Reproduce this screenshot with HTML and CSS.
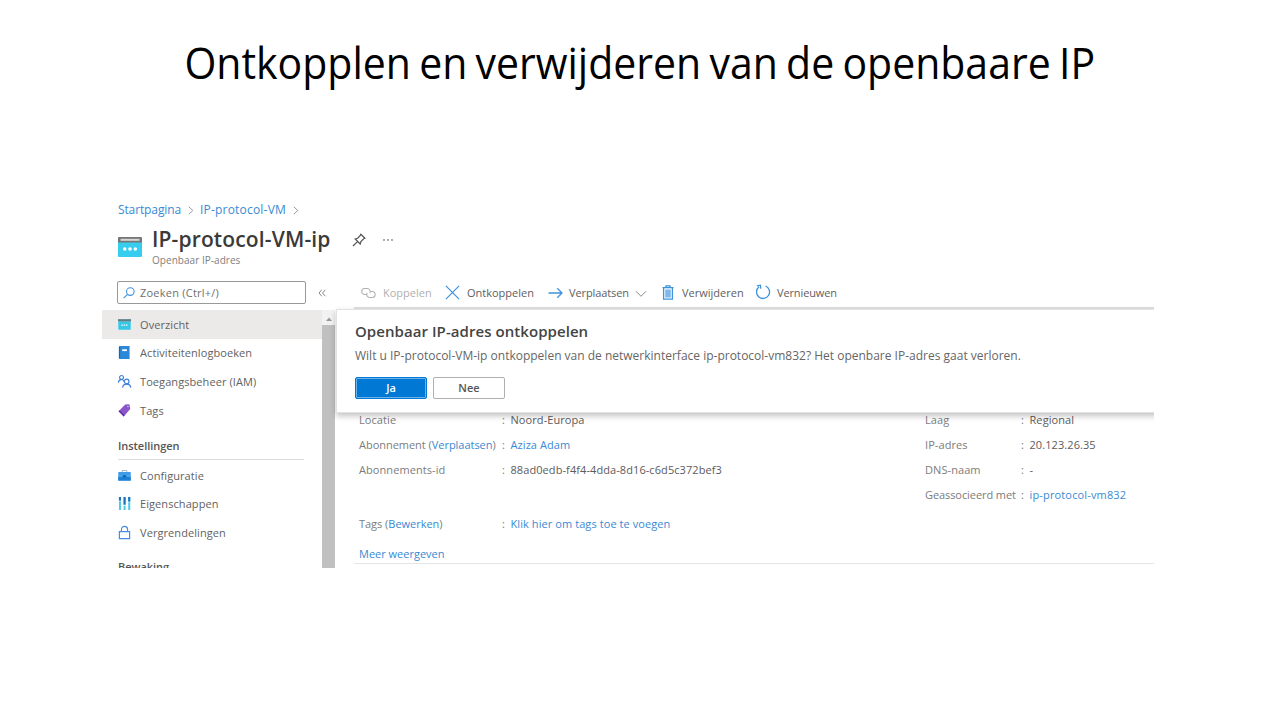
FILE: index.html
```html
<!DOCTYPE html>
<html lang="nl">
<head>
<meta charset="utf-8">
<title>Ontkopplen en verwijderen van de openbaare IP</title>
<link rel="stylesheet" href="styles.css">
</head>
<body>
<h1 class="slide-title"><span class="slide-title-text">Ontkopplen en verwijderen van de openbaare IP</span></h1>
<div class="portal">
  <nav class="crumbs">
    <a class="crumb-home">Startpagina</a>
    <svg class="chev" viewBox="0 0 8 10"><path d="M1.5 .8 6 5 1.5 9.2"/></svg>
    <a class="crumb-vm">IP-protocol-VM</a>
    <svg class="chev" viewBox="0 0 8 10"><path d="M1.5 .8 6 5 1.5 9.2"/></svg>
  </nav>
  <header class="resource">
    <svg class="resource-icon" viewBox="0 0 24 20"><path fill="#37cdee" d="M0 5h24v14a1 1 0 0 1-1 1H1a1 1 0 0 1-1-1z"/><path fill="#767676" d="M1 0h22a1 1 0 0 1 1 1v4.5H0V1a1 1 0 0 1 1-1z"/><path fill="#d8d8d8" d="M2.5 1.8h19v2h-19z"/><g fill="#fff"><circle cx="6.7" cy="12" r="1.8"/><circle cx="12" cy="12" r="1.8"/><circle cx="17.3" cy="12" r="1.8"/></g></svg>
    <div class="resource-text">
      <h2 class="resource-name">IP-protocol-VM-ip</h2>
      <div class="resource-type">Openbaar IP-adres</div>
    </div>
    <svg class="pin" viewBox="0 0 14 14"><path d="M8.8 1.2 12.9 5.2 11.7 5.8 8.9 8.5 8.2 11 3.2 6 5.7 5.2 8.3 2.4zM5.5 8.6 1 13"/></svg>
    <svg class="more" viewBox="0 0 12 4"><circle cx="2" cy="2" r=".9"/><circle cx="6" cy="2" r=".9"/><circle cx="10" cy="2" r=".9"/></svg>
  </header>
  <div class="bar">
    <div class="search">
      <svg class="search-icon" viewBox="0 0 12 12"><circle cx="7.3" cy="4.6" r="3.8"/><path d="M4.6 7.3.6 11.2"/></svg>
      <span>Zoeken (Ctrl+/)</span>
    </div>
    <svg class="collapse" viewBox="0 0 8 8"><path d="M3.8.8 1 4l2.8 3.2M7.3.8 4.5 4l2.8 3.2"/></svg>
    <div class="toolbar">
      <div class="tool link disabled"><svg viewBox="0 0 16 12"><path d="M5.600 7.700H3.900a3.200 3.200 0 0 1 0-6.400h2.800a3.200 3.200 0 0 1 2.600 5M10.400 4.300h1.500a3.200 3.200 0 0 1 0 6.400H9.200a3.200 3.200 0 0 1-2.600-5"/></svg><span>Koppelen</span></div>
      <div class="tool cut"><svg viewBox="0 0 16 16"><path d="m1 1 14 14M15 1 1 15"/></svg><span>Ontkoppelen</span></div>
      <div class="tool move"><svg viewBox="0 0 15 12"><path d="M.5 6H14M9.3 1.3 14 6l-4.700 4.700"/></svg><span>Verplaatsen</span><svg class="down" viewBox="0 0 12 8"><path d="m1 1.300 5 5 5-5"/></svg></div>
      <div class="tool del"><svg viewBox="0 0 12 15"><path fill="#a9d2f3" stroke="none" d="M3.500 4.500h5v8h-5z"/><path d="M.5 2.600h11M4 2.400V.8h4v1.600M1.600 2.800v11.400h8.800V2.800"/><path stroke-width=".8" d="M4 4.500v8M6 4.500v8M8 4.500v8"/></svg><span>Verwijderen</span></div>
      <div class="tool fresh"><svg viewBox="0 0 16 16"><path d="M4.100 2.800A6.500 6.500 0 1 0 10.600 2M1.800 1.800l3.600-.6.400 3.500"/></svg><span>Vernieuwen</span></div>
    </div>
  </div>
  <div class="content">
    <aside class="side">
      <div class="menu">
        <div class="item active"><svg viewBox="0 0 14 14"><path fill="#37c8e8" d="M.3 3.500h13.400V12a.7.7 0 0 1-.7.700H1a.7.700 0 0 1-.7-.7z"/><path fill="#5e8188" d="M0 1.200h14v2.500H0z"/><path stroke="#fff" stroke-width="1.300" stroke-dasharray="1.500 1" d="M3.700 7.700h7"/></svg><span>Overzicht</span></div>
        <div class="item"><svg viewBox="0 0 14 14"><path fill="#2b88d8" d="M2 0h10.500v14H2a1 1 0 0 1-1-1V1a1 1 0 0 1 1-1z"/><path fill="#1267b4" d="M1 .8h1.300v12.500H1z"/><path fill="#fff" d="M4.500 3.500h5v2h-5z"/></svg><span>Activiteitenlogboeken</span></div>
        <div class="item"><svg viewBox="0 0 14 14" fill="none" stroke="#3c7fdc" stroke-width="1.200"><circle cx="3.800" cy="2.600" r="2.100"/><path d="M.4 8.200c.2-4.200 5.600-4.200 6.200-1"/><circle cx="9.300" cy="7" r="2.500"/><path d="M5 13.700c.3-5.200 8.400-5.200 8.700 0"/></svg><span>Toegangsbeheer (IAM)</span></div>
        <div class="item tags"><svg viewBox="0 0 14 14"><path fill="#8a55cc" d="M7.800.6 12.300.300l.9 5.200-7 7.900L.6 7.800z"/><path fill="#5b2d9c" d="M.6 7.800 1.500 6.800l5.600 5.500-.9 1.100z"/><circle cx="10.700" cy="2.800" r=".8" fill="#d9c4f2"/></svg><span>Tags</span></div>
        <div class="group">Instellingen</div>
        <div class="item"><svg viewBox="0 0 14 14"><path fill="none" stroke="#9bb5cc" d="M4.500 3.300V1.600h5v1.700"/><path fill="#3f9be8" d="M.3 3.200h13.400v9.300H.3z"/><path fill="#1f7fd2" d="M.3 8h13.400v4.500H.3z"/><path fill="#67c3f3" d="M.3 7.300h4v.9h-4zM9.700 7.300h4v.9h-4z"/><path fill="#0f62b0" d="M5.500 6.700h3V9h-3z"/></svg><span>Configuratie</span></div>
        <div class="item"><svg viewBox="0 0 14 14"><path fill="#4ecbe8" d="M1 0h2.200v14H1zM6 0h2.200v14H6zM11 0h2.200v14H11z"/><path fill="#1b72c0" d="M1 0h2.200v4H1zM6 0h2.200v8H6zM11 0h2.200v5H11z"/><path fill="#fff" d="M.5 4h3v.7h-3zM5.500 9h3v.7h-3zM10.500 5h3v.7h-3z"/></svg><span>Eigenschappen</span></div>
        <div class="item"><svg viewBox="0 0 14 14" fill="none" stroke="#4a8be6" stroke-width="1.300"><path d="M1.500 6h11v7.500h-11zM3.700 6V3.800C3.700-.7 10.300-.7 10.300 3.800V6"/></svg><span>Vergrendelingen</span></div>
        <div class="group last">Bewaking</div>
      </div>
      <div class="scroll"><svg class="up" viewBox="0 0 8 4"><path d="M1 4 4 .5 7 4z"/></svg><div class="thumb"></div></div>
    </aside>
    <main class="main">
      <div class="props">
        <dl class="col left">
          <dt>Locatie</dt><dd>Noord-Europa</dd>
          <dt class="tight">Abonnement (<a>Verplaatsen</a>)</dt><dd><a>Aziza Adam</a></dd>
          <dt>Abonnements-id</dt><dd>88ad0edb-f4f4-4dda-8d16-c6d5c372bef3</dd>
        </dl>
        <dl class="col right">
          <dt>Laag</dt><dd>Regional</dd>
          <dt>IP-adres</dt><dd class="ip">20.123.26.35</dd>
          <dt>DNS-naam</dt><dd>-</dd>
          <dt class="assoc">Geassocieerd met</dt><dd><a class="nic">ip-protocol-vm832</a></dd>
        </dl>
      </div>
      <dl class="col left"><dt class="tight">Tags (<a>Bewerken</a>)</dt><dd><a>Klik hier om tags toe te voegen</a></dd></dl>
      <div class="show-more"><a>Meer weergeven</a></div>
      <section class="dialog">
        <h3 class="dialog-title">Openbaar IP-adres ontkoppelen</h3>
        <p class="dialog-text">Wilt u IP-protocol-VM-ip ontkoppelen van de netwerkinterface ip-protocol-vm832? Het openbare IP-adres gaat verloren.</p>
        <div class="buttons"><button class="btn primary">Ja</button><button class="btn">Nee</button></div>
      </section>
      <div class="toolbar-line"></div>
    </main>
  </div>
</div>
</body>
</html>
```
FILE: styles.css
```css
* { box-sizing: border-box; }
body { margin: 0; width: 1280px; height: 720px; overflow: hidden; background: #fff; font-family: "Open Sans", "Noto Sans", sans-serif; }
h1, h2, h3, p, dl, dd { margin: 0; }
svg { display: block; flex: none; overflow: visible; }
a { color: #3a8ad3; }

.slide-title { height: 195px; padding-top: 34px; text-align: center; font-size: 43px; line-height: 58px; font-weight: 400; color: #000; white-space: nowrap; }
.slide-title-text { display: inline-block; word-spacing: -2.5px; transform: scaleX(.953); }

.portal { width: 1052px; height: 373px; margin-left: 102px; overflow: hidden; display: flex; flex-direction: column; font-size: 11px; letter-spacing: .08px; color: #666; white-space: nowrap; }

.crumbs { height: 30px; padding: 0 0 2px 16px; display: flex; align-items: center; font-size: 12px; flex: none; }
.crumb-home { letter-spacing: -.12px; width: 63px; }
.crumb-vm { letter-spacing: .2px; width: 86px; }
.chev { width: 8px; height: 9px; margin: 2px 5px 0 6px; fill: none; stroke: #999; stroke-width: 1.1; }

.resource { height: 49px; padding-left: 16px; display: flex; flex: none; }
.resource-icon { width: 24px; height: 20px; margin-top: 12px; }
.resource-text { width: 178px; margin-left: 10px; }
.resource-name { font-size: 21px; line-height: 28px; font-weight: 600; color: #3a3a3a; letter-spacing: .14px; }
.resource-type { font-size: 10px; line-height: 14px; color: #808080; letter-spacing: .04px; }
.pin { width: 14px; height: 14px; margin: 8px 0 0 22px; fill: none; stroke: #555; stroke-width: 1.2; }
.more { width: 12px; height: 4px; margin: 13px 0 0 16px; fill: #888; }

.bar { height: 35px; padding: 7px 0 0 15px; display: flex; flex: none; }
.search { width: 189px; height: 23px; padding: 0 5px; display: flex; align-items: center; border: 1px solid #999; border-radius: 2px; color: #707070; letter-spacing: .23px; }
.search-icon { width: 12px; height: 12px; margin-right: 5px; fill: none; stroke: #3f93dc; stroke-width: 1.1; }
.collapse { width: 8px; height: 8px; margin: 8px 0 0 12px; fill: none; stroke: #888; }
.toolbar { display: flex; height: 23px; padding-left: 35px; align-items: center; }
.tool { display: flex; align-items: center; letter-spacing: 0; color: #606060; }
.tool svg { fill: none; stroke: #3f93dc; stroke-width: 1.3; }
.link { width: 84px; }
.link svg { width: 15px; height: 12px; margin-right: 7px; }
.tool.disabled { color: #b0b0b0; }
.disabled svg { stroke: #b0b0b0; stroke-width: 1.1; }
.cut { width: 103px; }
.cut svg { width: 15px; height: 15px; margin-right: 7px; }
.tool.move { width: 114px; letter-spacing: -.1px; }
.move svg { width: 15px; height: 12px; margin-right: 6px; }
.move .down { width: 12px; height: 8px; margin: 2px 0 0 6px; stroke: #888; stroke-width: 1; }
.tool.del { width: 94px; }
.del svg { width: 12px; height: 15px; margin-right: 8px; }
.tool.fresh { letter-spacing: -.12px; }
.fresh svg { width: 16px; height: 16px; margin: -1px 6px 0 -1px; }

.content { display: flex; height: 259px; flex: none; }
.side { width: 234px; padding-top: 1px; display: flex; flex: none; }
.menu { width: 220px; display: flex; flex-direction: column; }
.item { height: 28.6px; padding: 0 0 0 16px; display: flex; align-items: center; gap: 9px; flex: none; color: #626262; }
.item svg { width: 13px; height: 13px; }
.active { background: #ebeae9; }
.group { height: 25px; margin: 10.4px 18px 1px 16px; line-height: 22px; border-bottom: 1px solid #dcdcdc; font-weight: 600; color: #555; flex: none; letter-spacing: -.05px; }
.last { border: 0; margin-top: 9.600px; }
.scroll { width: 13px; background: #f2f2f2; }
.up { width: 8px; height: 4px; margin: 7px 0 4px 3px; fill: #999; }
.thumb { height: 243px; background: #c0c0c0; }

.main { position: relative; flex: 1; min-width: 0; }
.props { display: flex; padding-top: 98px; height: 202px; }
.col { display: grid; grid-auto-rows: 24.9px; align-content: start; align-items: center; }
.left { flex: none; width: 567px; padding-left: 23px; grid-template-columns: 143px 1fr; }
.right { grid-template-columns: 96px 1fr; margin-left: 22px; }
dt { color: #7c7c7c; }
dd { color: #5c5c5c; }
dd::before { content: ":"; display: inline-block; width: 8.500px; color: #777; }
.tight { letter-spacing: -.03px; }
.assoc { letter-spacing: -.08px; }
.nic { letter-spacing: .15px; }
.show-more { height: 28px; margin-left: 18px; padding: 10px 0 0 5px; line-height: 15px; border-bottom: 1px solid #e6e6e6; letter-spacing: 0; }
.toolbar-line { position: absolute; top: -2px; left: 18px; right: 0; height: 2px; background: #dadada; }
.dialog { position: absolute; top: 0; left: 0; right: -12px; height: 104px; padding: 12px 0 0 18px; background: #fff; border: 1px solid #e2e2e2; box-shadow: 0 3px 6px rgba(0, 0, 0, .24); }
.dialog-title { font-size: 15px; line-height: 18px; font-weight: 600; color: #444; letter-spacing: .06px; }
.dialog-text { margin-top: 8px; font-size: 12px; line-height: 16px; letter-spacing: 0; color: #666; }
.buttons { display: flex; gap: 6px; margin-top: 13px; }
.btn { width: 72px; height: 22px; padding: 0; border: 1px solid #b0b0b0; border-radius: 2px; background: #fff; font: 600 11px/18px "Open Sans", sans-serif; color: #555; }
.primary { border-color: #0078d4; background: #0078d4; color: #fff; box-shadow: inset 0 0 0 1px #6bb3ea; }
```
